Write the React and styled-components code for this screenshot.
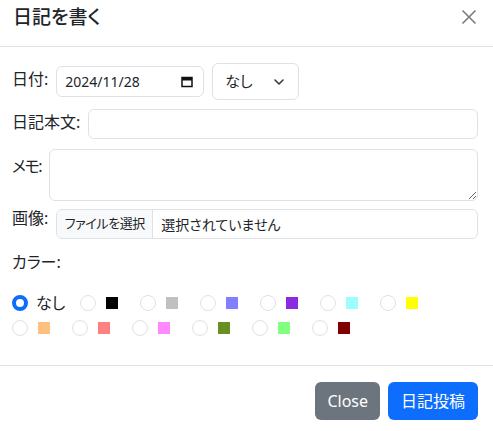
import React from "react";
import styled, { createGlobalStyle } from "styled-components";

const GlobalStyle = createGlobalStyle`
  html, body {
    margin: 0;
    padding: 0;
    background: #fff;
  }
  body {
    font-family: "Noto Sans", "Noto Sans CJK JP", sans-serif;
    color: #212529;
    font-size: 16px;
    line-height: 1.5;
    font-feature-settings: "palt";
  }
  * {
    box-sizing: border-box;
  }
`;

const Modal = styled.div`
  width: 493px;
  height: 431px;
  display: flex;
  flex-direction: column;
  overflow: hidden;
`;

const Header = styled.header`
  height: 47px;
  display: flex;
  align-items: flex-start;
  justify-content: space-between;
  padding: 2px 15px 0 13px;
  border-bottom: 1px solid #dee2e6;
`;

const Title = styled.h5`
  margin: 0;
  font-size: 19px;
  font-weight: 500;
  line-height: 30px;
`;

const CloseX = styled.button`
  border: 0;
  background: transparent;
  padding: 0;
  margin-top: 6px;
  width: 18px;
  height: 18px;
  display: flex;
  align-items: center;
  justify-content: center;
  cursor: pointer;
`;

const Body = styled.div`
  padding: 16px 15px 25px 12px;
  border-bottom: 1px solid #dee2e6;
`;

const Row = styled.div`
  display: flex;
  align-items: flex-start;
  gap: 8px;
  margin-bottom: ${(p) => p.$mb || 0}px;
`;

const Label = styled.label`
  flex: none;
  line-height: 24px;
  margin-top: ${(p) => p.$top || 0}px;
  letter-spacing: ${(p) => p.$ls || 0}px;
`;

const DateField = styled.div`
  width: 148px;
  height: 31px;
  margin-top: 3px;
  border: 1px solid #dee2e6;
  border-radius: 6px;
  padding: 0 10px 0 8px;
  display: flex;
  align-items: center;
  justify-content: space-between;
  font-size: 14px;
`;

const SelectBox = styled.div`
  width: 87px;
  height: 37px;
  border: 1px solid #dee2e6;
  border-radius: 6px;
  padding: 0 13px 0 12px;
  display: flex;
  align-items: center;
  justify-content: space-between;
  font-size: 15px;
`;

const TextInput = styled.input`
  flex: 1;
  height: 30px;
  border: 1px solid #dee2e6;
  border-radius: 6px;
  padding: 4px 8px;
  font: inherit;
  font-size: 14px;
  outline: none;
`;

const Memo = styled.textarea`
  flex: 1;
  height: 52px;
  border: 1px solid #dee2e6;
  border-radius: 6px;
  padding: 4px 8px;
  font: inherit;
  font-size: 14px;
  resize: vertical;
  outline: none;
`;

const FileField = styled.div`
  flex: 1;
  height: 30px;
  border: 1px solid #dee2e6;
  border-radius: 6px;
  display: flex;
  align-items: stretch;
  overflow: hidden;
  font-size: 14px;
  white-space: nowrap;
`;

const FileButton = styled.span`
  flex: none;
  width: 96px;
  background: #f8f9fa;
  border-right: 1px solid #dee2e6;
  display: flex;
  align-items: center;
  justify-content: center;
  font-size: 13px;
  letter-spacing: -0.4px;
`;

const FileName = styled.span`
  display: flex;
  align-items: center;
  padding-left: 8px;
`;

const ColorLabel = styled.div`
  line-height: 24px;
  margin: 11px 0 16px;
`;

const Choices = styled.div`
  display: flex;
  flex-wrap: wrap;
`;

const Choice = styled.label`
  height: 25px;
  display: flex;
  align-items: center;
  gap: 8px;
  margin-right: ${(p) => p.$mr || 22}px;
`;

const Radio = styled.span`
  width: 16px;
  height: 16px;
  border-radius: 50%;
  flex: none;
  border: ${(p) => (p.$checked ? "4px solid #0d6efd" : "1px solid #dee2e6")};
  background: #fff;
`;

const Swatch = styled.span`
  width: 12px;
  height: 12px;
  margin-left: 2px;
  background: ${(p) => p.$color};
`;

const Footer = styled.footer`
  flex: 1;
  display: flex;
  justify-content: flex-end;
  align-items: flex-start;
  gap: 8px;
  padding: 16px 15px 0 12px;
`;

const Button = styled.button`
  height: 38px;
  border: 0;
  border-radius: 6px;
  padding: 0 12px;
  font: inherit;
  font-size: 16px;
  color: #fff;
  background: ${(p) => (p.$primary ? "#0d6efd" : "#6c757d")};
  min-width: ${(p) => p.$w}px;
  cursor: pointer;
`;

const colors = [
  "#000000",
  "#c0c0c0",
  "#8080ff",
  "#8a2be2",
  "#99ffff",
  "#ffff00",
  "#ffbf80",
  "#ff8080",
  "#ff88ff",
  "#6b8e23",
  "#80ff80",
  "#800000",
];

function CalendarIcon() {
  return (
    <svg width="12" height="12" viewBox="0 0 12 12">
      <rect x="1" y="1.5" width="10" height="9" fill="none" stroke="#111" strokeWidth="1.5" />
      <rect x="1" y="1.5" width="10" height="3" fill="#111" />
    </svg>
  );
}

function Chevron() {
  return (
    <svg width="12" height="8" viewBox="0 0 12 8">
      <path d="M2 2l4 4 4-4" fill="none" stroke="#343a40" strokeWidth="1.6" strokeLinecap="round" strokeLinejoin="round" />
    </svg>
  );
}

export default function App() {
  return (
    <>
      <GlobalStyle />
      <Modal>
        <Header>
          <Title>日記を書く</Title>
          <CloseX aria-label="Close">
            <svg width="16" height="16" viewBox="0 0 16 16">
              <path d="M1.5 1.5l13 13M14.5 1.5l-13 13" stroke="#7b7b7b" strokeWidth="1.6" />
            </svg>
          </CloseX>
        </Header>
        <Body>
          <Row $mb={9}>
            <Label $top={4}>日付:</Label>
            <DateField>
              <span>2024/11/28</span>
              <CalendarIcon />
            </DateField>
            <SelectBox>
              <span>なし</span>
              <Chevron />
            </SelectBox>
          </Row>
          <Row $mb={10}>
            <Label $top={1}>日記本文:</Label>
            <TextInput type="text" />
          </Row>
          <Row $mb={8}>
            <Label $top={5} $ls={-1.5}>メモ:</Label>
            <Memo />
          </Row>
          <Row>
            <Label $top={-3}>画像:</Label>
            <FileField>
              <FileButton>ファイルを選択</FileButton>
              <FileName>選択されていません</FileName>
            </FileField>
          </Row>
          <ColorLabel>カラー:</ColorLabel>
          <Choices>
            <Choice $mr={15}>
              <Radio $checked />
              <span>なし</span>
            </Choice>
            {colors.map((c) => (
              <Choice key={c}>
                <Radio />
                <Swatch $color={c} />
              </Choice>
            ))}
          </Choices>
        </Body>
        <Footer>
          <Button $w={64}>Close</Button>
          <Button $primary $w={90}>日記投稿</Button>
        </Footer>
      </Modal>
    </>
  );
}
